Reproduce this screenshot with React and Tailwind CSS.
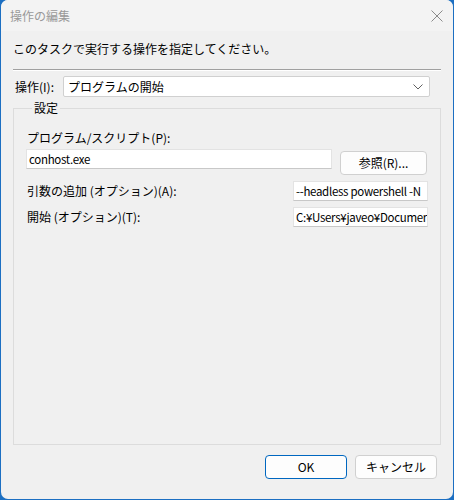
import React from 'react';

const font = { fontFamily: '"Noto Sans CJK JP", "Noto Sans", sans-serif' };

function Field({ children, className }) {
  return (
    <div className={`h-[20px] bg-white border border-[#e3e3e3] border-b-[#c8c8c8] px-[2px] text-[11.5px] tracking-[-0.3px] leading-[18px] text-black overflow-hidden whitespace-nowrap ${className}`}>
      {children}
    </div>
  );
}

function Button({ children, primary, className }) {
  return (
    <button
      className={`h-[24px] rounded-[4px] bg-[#fdfdfd] text-[12px] text-black border ${primary ? 'border-[#0067c0]' : 'border-[#d0d0d0]'} ${className}`}
    >
      {children}
    </button>
  );
}

export default function App() {
  return (
    <div className="w-[454px] h-[500px] bg-[#1c6fc2] px-px pb-px" style={font}>
      <div className="h-full flex flex-col bg-[#f0f0f0] rounded-[7px] overflow-hidden">
        {/* Title bar */}
        <div className="h-[31px] flex-shrink-0 bg-[#f3f3f3] flex items-center justify-between pl-[9px] pr-[9px]">
          <span className="text-[12px] text-[#999999]">操作の編集</span>
          <svg className="w-[14px] h-[14px]" viewBox="0 0 14 14" fill="none" stroke="#8a8a8a" strokeWidth="1">
            <path d="M1.5 1.5l11 11M12.5 1.5l-11 11" />
          </svg>
        </div>

        {/* Body */}
        <div className="flex-1 flex flex-col px-[12px]">
          <p className="mt-[10px] text-[12px] leading-[16px] text-black">このタスクで実行する操作を指定してください。</p>

          <div className="mt-[12px] border-t border-[#a0a0a0] border-b border-b-white" />

          <div className="mt-[5px] flex items-center gap-[4px] pl-[2px]">
            <span className="w-[44px] text-[12px] text-black">操作(I):</span>
            <div className="flex-1 mr-[11px] h-[21px] bg-white border border-[#d0d0d0] rounded-[2px] flex items-center justify-between pl-[4px] pr-[6px] text-[12px]">
              <span>プログラムの開始</span>
              <svg className="w-[10px] h-[6px]" viewBox="0 0 10 6" fill="none" stroke="#606060" strokeWidth="1">
                <path d="M0.5 0.5l4.5 4.5 4.5-4.5" />
              </svg>
            </div>
          </div>

          <fieldset className="mt-[4px] h-[344px] border border-[#dcdcdc] px-[12px]">
            <legend className="ml-[6px] px-[2px] text-[12px] leading-[14px] text-black">設定</legend>

            <p className="mt-[15px] text-[12px] leading-[16px] pl-[1px]">プログラム/スクリプト(P):</p>
            <div className="mt-[4px] flex items-start">
              <Field className="w-[306px] mt-[-1px]">conhost.exe</Field>
              <Button className="ml-[8px] w-[87px] mt-[1px] h-[23px]">参照(R)...</Button>
            </div>

            <div className="mt-[6px] flex items-center justify-between">
              <span className="text-[12px] pl-[1px]">引数の追加 (オプション)(A):</span>
              <Field className="w-[135px]">--headless powershell -N</Field>
            </div>
            <div className="mt-[6px] flex items-center justify-between">
              <span className="text-[12px] pl-[1px]">開始 (オプション)(T):</span>
              <Field className="w-[135px]">C:¥Users¥javeo¥Documer</Field>
            </div>
          </fieldset>

          <div className="mt-[10px] flex justify-end gap-[8px] pr-[4px]">
            <Button primary className="w-[82px]">OK</Button>
            <Button className="w-[82px]">キャンセル</Button>
          </div>
        </div>
      </div>
    </div>
  );
}
